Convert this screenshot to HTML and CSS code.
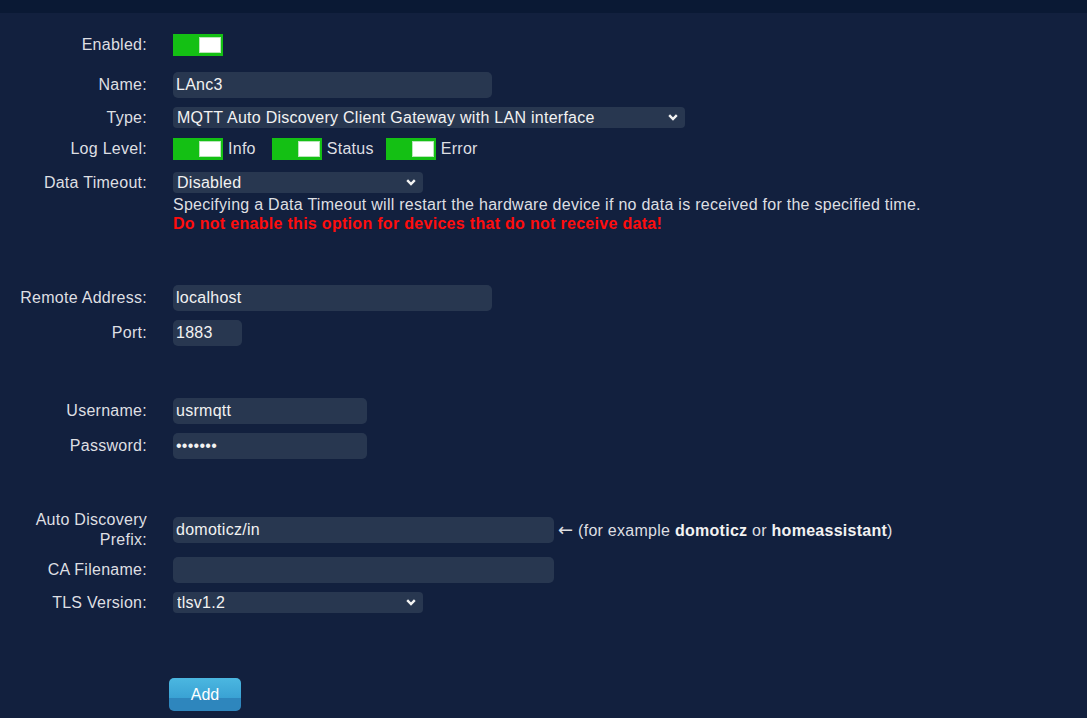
FILE: index.html
```html
<!DOCTYPE html>
<html lang="en">
<head>
    <meta charset="UTF-8">
    <meta name="viewport" content="width=device-width, initial-scale=1.0">
    <title>Hardware Setup</title>
    <link rel="stylesheet" href="styles.css">
</head>
<body>
    <div class="topbar"></div>

    <form class="hw-form" onsubmit="return false;">
        <div class="row row-first">
            <label>Enabled:</label>
            <div><span class="toggle"></span></div>
        </div>

        <div class="row row-name">
            <label for="name">Name:</label>
            <div><input type="text" id="name" class="text w-md" value="LAnc3"></div>
        </div>

        <div class="row">
            <label for="type">Type:</label>
            <div class="select-wrap w-xl">
                <select id="type" class="combo">
                    <option>MQTT Auto Discovery Client Gateway with LAN interface</option>
                </select>
                <svg class="chev" width="10" height="7" viewBox="0 0 10 7"><path d="M1.2 1.2 L5 5 L8.8 1.2" /></svg>
            </div>
        </div>

        <div class="row row-log">
            <label>Log Level:</label>
            <div class="loglevels">
                <span class="opt opt-info"><span class="toggle"></span>Info</span>
                <span class="opt"><span class="toggle"></span>Status</span>
                <span class="opt"><span class="toggle"></span>Error</span>
            </div>
        </div>

        <div class="row row-top row-timeout">
            <label for="timeout" class="lbl-select">Data Timeout:</label>
            <div>
                <div class="select-wrap w-sm timeout-select">
                    <select id="timeout" class="combo">
                        <option>Disabled</option>
                    </select>
                    <svg class="chev" width="10" height="7" viewBox="0 0 10 7"><path d="M1.2 1.2 L5 5 L8.8 1.2" /></svg>
                </div>
                <div class="help">Specifying a Data Timeout will restart the hardware device if no data is received for the specified time.</div>
                <div class="help warn">Do not enable this option for devices that do not receive data!</div>
            </div>
        </div>

        <div class="row gap-lg">
            <label for="address">Remote Address:</label>
            <div><input type="text" id="address" class="text w-md" value="localhost"></div>
        </div>

        <div class="row">
            <label for="port">Port:</label>
            <div><input type="text" id="port" class="text w-xs" value="1883"></div>
        </div>

        <div class="row gap-lg">
            <label for="username">Username:</label>
            <div><input type="text" id="username" class="text w-s" value="usrmqtt"></div>
        </div>

        <div class="row">
            <label for="password">Password:</label>
            <div><input type="password" id="password" class="text w-s" value="1234567"></div>
        </div>

        <div class="row gap-lg row-prefix">
            <label for="prefix" class="lbl-wrap">Auto Discovery Prefix:</label>
            <div class="inline">
                <input type="text" id="prefix" class="text w-lg" value="domoticz/in">
                <span class="note"><span class="arrow">&larr;</span> (for example <b>domoticz</b> or <b>homeassistant</b>)</span>
            </div>
        </div>

        <div class="row row-ca">
            <label for="cafile">CA Filename:</label>
            <div><input type="text" id="cafile" class="text w-lg" value=""></div>
        </div>

        <div class="row">
            <label for="tls">TLS Version:</label>
            <div class="select-wrap w-sm">
                <select id="tls" class="combo">
                    <option>tlsv1.2</option>
                </select>
                <svg class="chev" width="10" height="7" viewBox="0 0 10 7"><path d="M1.2 1.2 L5 5 L8.8 1.2" /></svg>
            </div>
        </div>

        <div class="row row-button">
            <span></span>
            <div><button class="btn-add">Add</button></div>
        </div>
    </form>
</body>
</html>
```

FILE: styles.css
```css
body {
    margin: 0;
    background-color: #12203e;
    font-family: "Liberation Sans", Arial, sans-serif;
    font-size: 16px;
    line-height: 1.2;
    letter-spacing: 0.27px;
    color: #dedfe2;
}
.topbar {
    height: 13px;
    background-color: #0a1934;
}
.hw-form {
    padding-top: 21px;
}
.row {
    display: grid;
    grid-template-columns: 147px 1fr;
    column-gap: 26px;
    align-items: center;
    margin-top: 9px;
}
.row-first {
    margin-top: 0;
}
.row-name {
    margin-top: 16px;
}
.row-log {
    margin-top: 10px;
}
.row-timeout {
    margin-top: 12px;
}
.row-top {
    align-items: start;
}
.gap-lg {
    margin-top: 52px;
}
.row-prefix {
    margin-top: 51px;
}
.row-ca {
    margin-top: 7px;
}
.row label {
    text-align: right;
}
.lbl-select {
    line-height: 21px;
}
.lbl-wrap {
    line-height: 20px;
    padding-left: 20px;
}
.toggle {
    display: inline-block;
    position: relative;
    width: 50px;
    height: 22px;
    background-color: #14c014;
    vertical-align: middle;
}
.toggle::after {
    content: "";
    position: absolute;
    right: 2px;
    top: 3px;
    width: 20px;
    height: 14px;
    background-color: #fff;
    border: 1px solid #b9e6b9;
}
.loglevels {
    display: flex;
    align-items: center;
    gap: 12px;
}
.opt {
    display: inline-flex;
    align-items: center;
    gap: 5px;
}
.opt-info {
    margin-right: 4px;
}
.text {
    box-sizing: border-box;
    height: 26px;
    padding: 0 3px;
    border: none;
    border-radius: 5px;
    background-color: #283750;
    color: #f2f2f2;
    font-family: inherit;
    font-size: 16px;
    letter-spacing: inherit;
    outline: none;
}
.w-xs { width: 69px; }
.w-s { width: 194px; }
.w-md { width: 319px; }
.w-lg { width: 381px; }
.select-wrap {
    position: relative;
    display: inline-block;
    justify-self: start;
}
.select-wrap.w-sm { width: 250px; }
.select-wrap.w-xl { width: 512px; }
.timeout-select {
    margin-bottom: 2px;
}
.combo {
    display: block;
    box-sizing: border-box;
    width: 100%;
    height: 21px;
    padding: 0 0 0 4px;
    border: none;
    border-radius: 4px;
    background-color: #283750;
    color: #f2f2f2;
    font-family: inherit;
    font-size: 16px;
    letter-spacing: inherit;
    appearance: none;
    -webkit-appearance: none;
    outline: none;
}
.chev {
    position: absolute;
    right: 7px;
    top: 7px;
    pointer-events: none;
}
.chev path {
    fill: none;
    stroke: #f2f2f2;
    stroke-width: 2.4;
}
.help {
    line-height: 19px;
}
.warn {
    color: #ff0d0d;
    font-weight: bold;
    letter-spacing: 0.3px;
}
.inline {
    display: flex;
    align-items: center;
    gap: 4px;
}
.arrow {
    font-family: "DejaVu Sans", sans-serif;
    font-size: 18px;
}
.note b {
    color: #f2f2f2;
}
.row-button {
    margin-top: 65px;
}
.btn-add {
    margin-left: -4px;
    width: 72px;
    height: 33px;
    border: none;
    border-radius: 5px;
    background: linear-gradient(to bottom, #4bb7e0 0%, #3aa2d4 60%, #2e86bd 61%, #2e86bd 100%);
    color: #fff;
    font-family: inherit;
    font-size: 16px;
    cursor: pointer;
}
```
